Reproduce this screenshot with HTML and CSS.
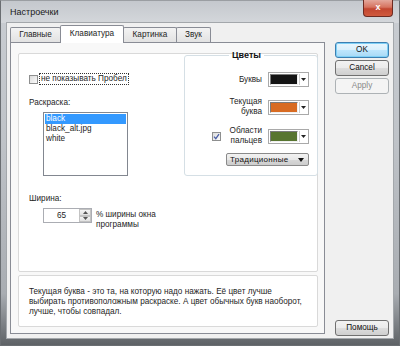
FILE: index.html
```html
<!DOCTYPE html>
<html lang="ru">
    <head>
        <meta charset="UTF-8">
        <meta name="viewport" content="width=device-width, initial-scale=1.0">
        <title>Настроечки</title>
        <link rel="stylesheet" href="styles.css">
    </head>
    <body>
        <div class="window">
            <div class="titlebar">
                <span class="title">Настроечки</span>
                <div class="close">x</div>
            </div>
            <div class="client">
                <div class="tabs-area">
                    <div class="tabs">
                        <div class="tab tab-main">Главные</div>
                        <div class="tab tab-keys active">Клавиатура</div>
                        <div class="tab tab-pic">Картинка</div>
                        <div class="tab tab-sound">Звук</div>
                    </div>
                    <div class="panel">
                        <div class="page">
                            <div class="page-left">
                                <div class="check-row">
                                    <span class="checkbox"></span>
                                    <span class="focus">не показывать Пробел</span>
                                </div>
                                <div class="caption caption-skin">Раскраска:</div>
                                <div class="listbox">
                                    <div class="item selected">black</div>
                                    <div class="item">black_alt.jpg</div>
                                    <div class="item">white</div>
                                </div>
                                <div class="caption caption-width">Ширина:</div>
                                <div class="width-row">
                                    <div class="spin">
                                        <span class="spin-value">65</span>
                                        <span class="spin-btns">
                                            <span class="spin-btn"><svg width="5" height="3" viewBox="0 0 5 3"><path d="M0 3 L2.5 0 L5 3 Z" fill="#555"/></svg></span>
                                            <span class="spin-btn"><svg width="5" height="3" viewBox="0 0 5 3"><path d="M0 0 L2.5 3 L5 0 Z" fill="#555"/></svg></span>
                                        </span>
                                    </div>
                                    <div class="width-text">% ширины окна<br>программы</div>
                                </div>
                            </div>
                            <fieldset class="colors">
                                <legend>Цветы</legend>
                                <div class="color-row row-letters">
                                    <span class="color-label">Буквы</span>
                                    <span class="picker">
                                        <span class="swatch swatch-black"></span>
                                        <span class="picker-arrow"><svg width="5" height="3" viewBox="0 0 5 3"><path d="M0 0 L2.5 3 L5 0 Z" fill="#222"/></svg></span>
                                    </span>
                                </div>
                                <div class="color-row row-current">
                                    <span class="color-label">Текущая<br>буква</span>
                                    <span class="picker">
                                        <span class="swatch swatch-orange"></span>
                                        <span class="picker-arrow"><svg width="5" height="3" viewBox="0 0 5 3"><path d="M0 0 L2.5 3 L5 0 Z" fill="#222"/></svg></span>
                                    </span>
                                </div>
                                <div class="color-row row-fingers">
                                    <span class="checkbox checked"><svg width="7" height="7" viewBox="0 0 7 7"><path d="M1 3.6 L2.8 5.6 L6 1.2" fill="none" stroke="#4b5fa6" stroke-width="1.3"/></svg></span>
                                    <span class="color-label">Области<br>пальцев</span>
                                    <span class="picker">
                                        <span class="swatch swatch-green"></span>
                                        <span class="picker-arrow"><svg width="5" height="3" viewBox="0 0 5 3"><path d="M0 0 L2.5 3 L5 0 Z" fill="#222"/></svg></span>
                                    </span>
                                </div>
                                <div class="combo">
                                    <span>Традиционные</span>
                                    <svg width="6" height="4" viewBox="0 0 6 4"><path d="M0 0 L3 4 L6 0 Z" fill="#111"/></svg>
                                </div>
                            </fieldset>
                        </div>
                        <div class="info">
                            Текущая буква - это та, на которую надо нажать. Её цвет лучше<br>
                            выбирать противоположным раскраске. А цвет обычных букв наоборот,<br>
                            лучше, чтобы совпадал.
                        </div>
                    </div>
                </div>
                <div class="buttons">
                    <div class="btn btn-default">OK</div>
                    <div class="btn">Cancel</div>
                    <div class="btn btn-disabled">Apply</div>
                    <div class="btn btn-help">Помощь</div>
                </div>
            </div>
        </div>
    </body>
</html>
```

FILE: styles.css
```css
body {
    margin: 0;
    font-family: "Liberation Sans", Arial, sans-serif;
    font-size: 8.2px;
    color: #1e1e1e;
    background-color: #ffffff;
}

.window {
    width: 400px;
    height: 346px;
    box-sizing: border-box;
    display: flex;
    flex-direction: column;
    background: linear-gradient(#c9cdd2 0%, #bfc3c8 40%, #a9adb2 85%, #5e6266 100%);
    border: 1px solid #6a6e72;
    border-top-color: #9a9ea2;
}

.titlebar {
    height: 22px;
    display: flex;
    align-items: flex-start;
    background: linear-gradient(#c4c8cd, #d4d7db);
}

.title {
    margin: 6px 0 0 9px;
    font-size: 9px;
    color: #1a1a1a;
}

.close {
    margin-left: auto;
    margin-right: 6px;
    margin-top: -1px;
    width: 30px;
    height: 17px;
    box-sizing: border-box;
    border: 1px solid #6d2b22;
    border-top: none;
    border-radius: 0 0 4px 4px;
    background: linear-gradient(#e4a89c 0%, #d6735f 45%, #c24630 55%, #d05a3e 100%);
    color: #ffffff;
    font-weight: bold;
    font-size: 9px;
    text-align: center;
    line-height: 14px;
}

.client {
    height: 315px;
    margin: 0 6px;
    display: flex;
    background-color: #f0f0f0;
    box-shadow: 0 0 0 1px #a3a7ab;
}

.tabs-area {
    width: 315px;
    margin: 2px 0 0 3px;
    display: flex;
    flex-direction: column;
}

.tabs {
    height: 17px;
    display: flex;
    align-items: flex-end;
}

.tab {
    height: 15px;
    box-sizing: border-box;
    border: 1px solid #898c95;
    border-bottom: none;
    border-radius: 2px 2px 0 0;
    background: linear-gradient(#f3f3f3, #e2e2e2);
    text-align: center;
    line-height: 14px;
}

.tab-main { width: 51px; }
.tab-keys { width: 64px; margin-left: -1px; }
.tab-pic { width: 54px; margin-left: -1px; }
.tab-sound { width: 35px; margin-left: -1px; }

.tab.active {
    position: relative;
    z-index: 1;
    height: 18px;
    margin-bottom: -1px;
    background: #ffffff;
    line-height: 16px;
}

.panel {
    height: 292px;
    box-sizing: border-box;
    border: 1px solid #898c95;
    background-color: #f8f8f8;
    padding: 10px 6px 6px 7px;
    display: flex;
    flex-direction: column;
    gap: 3px;
}

.page {
    height: 219px;
    box-sizing: border-box;
    border: 1px solid #d9d9d9;
    border-radius: 2px;
    background-color: #ffffff;
    display: flex;
    align-items: flex-start;
}

.page-left {
    width: 165px;
    padding: 19px 0 0 10px;
    box-sizing: border-box;
}

.check-row {
    display: flex;
    align-items: center;
    gap: 1px;
}

.checkbox {
    width: 9px;
    height: 9px;
    box-sizing: border-box;
    border: 1px solid #8e8f8f;
    background: linear-gradient(135deg, #dcdcdc, #fbfbfb);
    display: flex;
    align-items: center;
    justify-content: center;
}

.focus {
    border: 1px dotted #333;
    padding: 0 1px;
    line-height: 10px;
}

.caption {
    line-height: 11px;
}

.caption-skin {
    margin-top: 12px;
}

.caption-width {
    margin-top: 17px;
}

.listbox {
    width: 85px;
    height: 64px;
    box-sizing: border-box;
    margin: 4px 0 0 14px;
    border: 1px solid #828790;
    padding: 1px;
}

.item {
    height: 10px;
    line-height: 10px;
    padding-left: 1px;
}

.item.selected {
    background-color: #3399ff;
    color: #ffffff;
}

.width-row {
    display: flex;
    align-items: flex-start;
    margin: 4px 0 0 14px;
    gap: 4px;
}

.spin {
    width: 49px;
    height: 15px;
    box-sizing: border-box;
    border: 1px solid #abadb3;
    display: flex;
}

.spin-value {
    flex: 1;
    text-align: center;
    line-height: 13px;
}

.spin-btns {
    width: 12px;
    display: flex;
    flex-direction: column;
}

.spin-btn {
    flex: 1;
    border: 1px solid #c3c3c3;
    background: linear-gradient(#f5f5f5, #e1e1e1);
    display: flex;
    align-items: center;
    justify-content: center;
}

.width-text {
    margin-top: 2px;
    line-height: 10px;
}

.colors {
    width: 134px;
    margin: -4px -1px 0 auto;
    box-sizing: border-box;
    border: 1px solid #d5dfe5;
    border-radius: 3px;
    padding: 11px 8px 9px 0;
    display: flex;
    flex-direction: column;
    align-items: flex-end;
}

.colors legend {
    margin-left: 44px;
    padding: 0 3px;
    font-weight: bold;
    font-size: 9px;
    line-height: 11px;
    color: #111;
}

.color-row {
    display: flex;
    align-items: center;
    justify-content: flex-end;
}

.row-letters { height: 15px; }
.row-current { height: 20px; margin-top: 10px; }
.row-fingers { height: 20px; margin-top: 9px; }

.color-label {
    text-align: right;
    line-height: 10px;
    margin-right: 6px;
}

.row-fingers .checkbox {
    margin-right: 9px;
}

.picker {
    width: 41px;
    height: 15px;
    box-sizing: border-box;
    border: 1px solid #a9a9a9;
    background-color: #ffffff;
    display: flex;
    align-items: center;
    padding: 1px;
}

.swatch {
    width: 28px;
    height: 11px;
    box-sizing: border-box;
    border: 1px solid #7a7a7a;
    border-right-color: #f0f0f0;
    border-bottom-color: #f0f0f0;
}

.swatch-black { background-color: #141414; }
.swatch-orange { background-color: #d86b22; }
.swatch-green { background-color: #587530; }

.picker-arrow {
    margin-left: 1px;
    flex: 1;
    height: 11px;
    border-left: 1px solid #d0d0d0;
    display: flex;
    align-items: center;
    justify-content: center;
}

.combo {
    margin-top: 7px;
    width: 83px;
    height: 13px;
    box-sizing: border-box;
    border: 1px solid #8a8a8a;
    border-radius: 2px;
    background: linear-gradient(#f2f2f2 0%, #e8e8e8 50%, #d8d8d8 51%, #cdcdcd 100%);
    display: flex;
    align-items: center;
    justify-content: space-between;
    padding: 0 4px 0 3px;
    font-size: 8px;
    letter-spacing: 0.3px;
    color: #111;
}

.info {
    height: 52px;
    box-sizing: border-box;
    border: 1px solid #d9d9d9;
    border-radius: 2px;
    background-color: #ffffff;
    padding: 11px 0 0 10px;
    line-height: 10px;
}

.buttons {
    width: 54px;
    margin-left: 10px;
    padding: 19px 0 2px;
    box-sizing: border-box;
    display: flex;
    flex-direction: column;
    gap: 2px;
}

.btn {
    height: 16px;
    box-sizing: border-box;
    border: 1px solid #707070;
    border-radius: 3px;
    background: linear-gradient(#f2f2f2 0%, #ebebeb 50%, #dddddd 51%, #cfcfcf 100%);
    text-align: center;
    line-height: 14px;
    color: #111;
}

.btn-default {
    border-color: #3c7fb1;
    background: linear-gradient(#eaf6fd 0%, #d9f0fc 50%, #bee6fd 51%, #a7d9f5 100%);
    box-shadow: inset 0 0 0 1px #7fd0f6;
}

.btn-disabled {
    border-color: #adb2b5;
    background: #f4f4f4;
    color: #8a8a8a;
}

.btn-help {
    margin-top: auto;
}
```
